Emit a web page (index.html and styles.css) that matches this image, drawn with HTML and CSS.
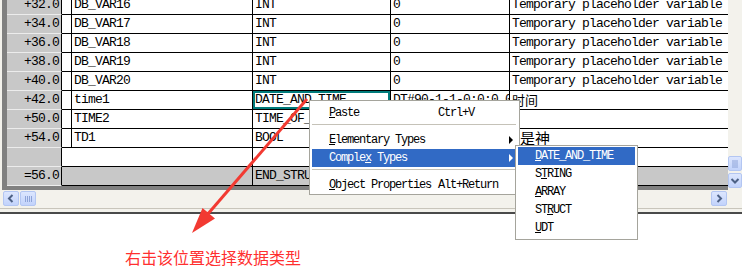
FILE: index.html
```html
<!DOCTYPE html>
<html lang="zh">
<head>
    <meta charset="UTF-8">
    <meta name="viewport" content="width=device-width, initial-scale=1.0">
    <title>变量声明</title>
    <link rel="stylesheet" href="styles.css">
</head>
<body>
    <div class="editor">
        <div class="table-pane">
            <div class="rows">
                <div class="row"><div class="addr">+32.0</div><div class="gap"></div><div class="cell">DB_VAR16</div><div class="cell">INT</div><div class="cell">0</div><div class="cell last">Temporary placeholder variable</div></div>
                <div class="row"><div class="addr">+34.0</div><div class="gap"></div><div class="cell">DB_VAR17</div><div class="cell">INT</div><div class="cell">0</div><div class="cell last">Temporary placeholder variable</div></div>
                <div class="row"><div class="addr">+36.0</div><div class="gap"></div><div class="cell">DB_VAR18</div><div class="cell">INT</div><div class="cell">0</div><div class="cell last">Temporary placeholder variable</div></div>
                <div class="row"><div class="addr">+38.0</div><div class="gap"></div><div class="cell">DB_VAR19</div><div class="cell">INT</div><div class="cell">0</div><div class="cell last">Temporary placeholder variable</div></div>
                <div class="row"><div class="addr">+40.0</div><div class="gap"></div><div class="cell">DB_VAR20</div><div class="cell">INT</div><div class="cell">0</div><div class="cell last">Temporary placeholder variable</div></div>
                <div class="row"><div class="addr">+42.0</div><div class="gap"></div><div class="cell">time1</div><div class="cell selected">DATE_AND_TIME</div><div class="cell">DT#90-1-1-0:0:0.000</div><div class="cell last"><span class="cjk">时间</span></div></div>
                <div class="row"><div class="addr">+50.0</div><div class="gap"></div><div class="cell">TIME2</div><div class="cell">TIME_OF_DAY</div><div class="cell">TOD#0:0:0.0</div><div class="cell last"></div></div>
                <div class="row"><div class="addr">+54.0</div><div class="gap"></div><div class="cell">TD1</div><div class="cell">BOOL</div><div class="cell">FALSE</div><div class="cell last"><span class="cjk shifted">不是神</span></div></div>
                <div class="row"><div class="addr"></div><div class="cell wide"></div><div class="cell"></div><div class="cell"></div><div class="cell last"></div></div>
                <div class="row total"><div class="addr">=56.0</div><div class="cell wide"></div><div class="cell">END_STRUCT</div><div class="cell"></div><div class="cell last"></div></div>
            </div>
        </div>
        <div class="vscroll">
            <span class="sbtn">
                <svg width="12" height="13" viewBox="0 0 12 13"><path d="M3 4h6M3 6h6M3 8h6M3 10h6" stroke="#8ea4d8" stroke-width="1"/></svg>
            </span>
            <span class="sbtn">
                <svg width="12" height="13" viewBox="0 0 12 13"><path d="M2.5 5l3.5 3.5 3.5-3.5" fill="none" stroke="#4d6185" stroke-width="2"/></svg>
            </span>
        </div>
    </div>

    <div class="hscroll">
        <span class="sbtn">
            <svg width="14" height="13" viewBox="0 0 14 13"><path d="M8.5 3l-3.5 3.5 3.5 3.5" fill="none" stroke="#4d6185" stroke-width="2"/></svg>
        </span>
        <span class="sbtn thumb">
            <svg width="14" height="13" viewBox="0 0 14 13"><path d="M4.5 4v6M6.5 4v6M8.5 4v6M10.5 4v6" stroke="#8ea4d8" stroke-width="1"/></svg>
        </span>
        <span class="spacer"></span>
        <span class="sbtn">
            <svg width="14" height="13" viewBox="0 0 14 13"><path d="M5.5 3l3.5 3.5-3.5 3.5" fill="none" stroke="#4d6185" stroke-width="2"/></svg>
        </span>
    </div>
    <div class="divider"></div>

    <p class="note">右击该位置选择数据类型</p>

    <div class="menu">
        <div class="item"><span class="label"><u>P</u>aste</span><span>Ctrl+V</span></div>
        <div class="sep"></div>
        <div class="item sub"><span class="label"><u>E</u>lementary Types</span></div>
        <div class="item sub active"><span class="label">Comple<u>x</u> Types</span></div>
        <div class="sep"></div>
        <div class="item"><span class="label"><u>O</u>bject Properties</span><span>Alt+Return</span></div>
    </div>

    <div class="menu submenu">
        <div class="item active"><u>D</u>ATE_AND_TIME</div>
        <div class="item">S<u>T</u>RING</div>
        <div class="item"><u>A</u>RRAY</div>
        <div class="item">ST<u>R</u>UCT</div>
        <div class="item"><u>U</u>DT</div>
    </div>

    <svg class="pointer" width="742" height="276" viewBox="0 0 742 276">
        <line x1="307" y1="99" x2="207" y2="215" stroke="#f23a32" stroke-width="3"/>
        <polygon points="192,233 215,218.5 202.5,208" fill="#f23a32"/>
    </svg>
</body>
</html>
```

FILE: styles.css
```css
body {
    margin: 0;
    background-color: white;
    font-family: 'Liberation Mono', 'Noto Sans CJK SC', monospace;
    color: black;
}

.editor {
    display: flex;
    height: 190px;
    background-color: #f3f2ec;
}

.table-pane {
    margin-left: 2px;
    width: 721px;
    height: 186px;
    border-left: 5px solid #808080;
    border-bottom: 4px solid #808080;
    overflow: hidden;
    background-color: white;
}

.rows {
    margin-top: -4px;
}

.row {
    display: grid;
    grid-template-columns: 55px 10px 181px 138px 119px 218px;
    height: 19px;
    font-size: 13px;
    letter-spacing: -0.8px;
    line-height: 18px;
}

.row > div {
    box-sizing: border-box;
    border-right: 1px solid black;
    border-bottom: 1px solid black;
    white-space: nowrap;
    overflow: hidden;
}

.row .addr {
    background-color: #c8c8c8;
    border-bottom-color: #ececec;
    text-align: right;
    padding-right: 2px;
}

.row .cell {
    padding-left: 2px;
}

.row .last {
    border-right: none;
}

.row .wide {
    grid-column: 2 / 4;
}

.row .selected {
    box-shadow: inset 0 0 0 2px #007b7b;
}

.row.total > div {
    background-color: #c8c8c8;
}

.cjk {
    font-family: 'Noto Sans CJK SC', sans-serif;
    font-size: 13px;
    letter-spacing: 0;
}

.cjk.shifted {
    font-size: 15px;
    margin-left: -7px;
}

.vscroll {
    width: 14px;
    display: flex;
    flex-direction: column;
    justify-content: flex-end;
    gap: 2px;
    padding-bottom: 2px;
}

.sbtn {
    display: flex;
    align-items: center;
    justify-content: center;
    box-sizing: border-box;
    width: 14px;
    height: 15px;
    border: 1px solid #b3c6f2;
    border-radius: 2px;
    background: linear-gradient(#dce6fe, #c2d3fb);
}

.hscroll {
    display: flex;
    align-items: center;
    height: 17px;
    padding: 0 15px 0 3px;
    background-color: #f3f2ec;
}

.hscroll .sbtn {
    width: 16px;
}

.hscroll .thumb {
    margin-left: 1px;
}

.spacer {
    flex: 1;
}

.divider {
    height: 7px;
    background: linear-gradient(#f3f2ec 0 1px, #c8c5bb 1px 2px, #f3f2ec 2px 5px, #4a4a4a 5px 7px);
}

.note {
    margin: 0;
    padding: 33px 0 0 125px;
    font-family: 'Noto Sans CJK SC', sans-serif;
    font-size: 16px;
    line-height: 20px;
    color: #ff2f2f;
}

.menu {
    position: absolute;
    left: 309px;
    top: 100px;
    width: 211px;
    box-sizing: border-box;
    padding: 3px 3px 0 2px;
    border: 1px solid #a5a49c;
    background-color: white;
    font-size: 12px;
    letter-spacing: -1.2px;
}

.item {
    position: relative;
    display: flex;
    height: 18px;
    line-height: 18px;
    padding-left: 17px;
    white-space: nowrap;
}

.item .label {
    width: 109px;
}

.item.active {
    background-color: #316ac5;
    color: white;
}

.item.sub::after {
    content: "";
    position: absolute;
    right: 3px;
    top: 5px;
    border-left: 4px solid black;
    border-top: 4px solid transparent;
    border-bottom: 4px solid transparent;
}

.item.sub.active::after {
    border-left-color: white;
}

.sep {
    margin: 2px 0 6px;
    border-top: 1px solid #c5c2b8;
}

.submenu {
    left: 515px;
    top: 145px;
    width: 123px;
    padding: 1px 2px 2px 2px;
}

.pointer {
    position: absolute;
    left: 0;
    top: 0;
    pointer-events: none;
}
```
